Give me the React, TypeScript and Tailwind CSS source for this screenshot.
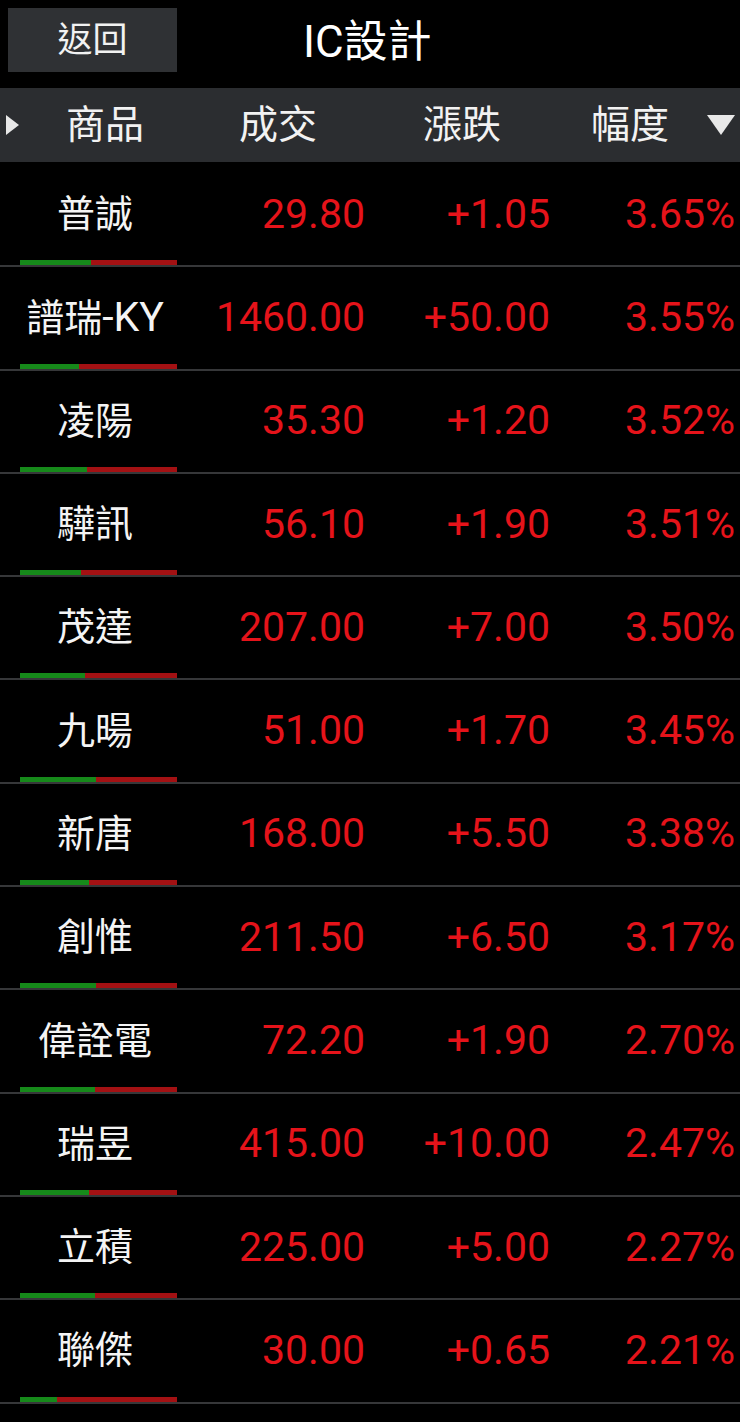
import React from "react";

type Row = { name: string; suffix?: string; price: string; change: string; pct: string; green: number };

const rows: Row[] = [
  { name: "普誠", price: "29.80", change: "+1.05", pct: "3.65%", green: 71 },
  { name: "譜瑞", suffix: "-KY", price: "1460.00", change: "+50.00", pct: "3.55%", green: 59 },
  { name: "凌陽", price: "35.30", change: "+1.20", pct: "3.52%", green: 67 },
  { name: "驊訊", price: "56.10", change: "+1.90", pct: "3.51%", green: 61 },
  { name: "茂達", price: "207.00", change: "+7.00", pct: "3.50%", green: 65 },
  { name: "九暘", price: "51.00", change: "+1.70", pct: "3.45%", green: 76 },
  { name: "新唐", price: "168.00", change: "+5.50", pct: "3.38%", green: 69 },
  { name: "創惟", price: "211.50", change: "+6.50", pct: "3.17%", green: 76 },
  { name: "偉詮電", price: "72.20", change: "+1.90", pct: "2.70%", green: 75 },
  { name: "瑞昱", price: "415.00", change: "+10.00", pct: "2.47%", green: 69 },
  { name: "立積", price: "225.00", change: "+5.00", pct: "2.27%", green: 75 },
  { name: "聯傑", price: "30.00", change: "+0.65", pct: "2.21%", green: 37 },
];

const font = { fontFamily: 'Roboto, "Noto Sans CJK TC", sans-serif' };

export default function App() {
  return (
    <div className="w-[740px] h-[1422px] bg-black overflow-hidden text-white" style={font}>
      {/* top bar */}
      <div className="h-[88px] flex items-start">
        <div className="mt-[8px] ml-[8px] w-[169px] h-[64px] bg-[#2f3134] flex items-center justify-center text-[35px] leading-none text-[#f2f2f2]">
          返回
        </div>
        <div className="pl-[126px] pt-[20px] text-[44px] leading-none text-white">IC設計</div>
      </div>
      {/* header */}
      <div className="h-[74px] bg-[#2b2d30] grid grid-cols-[19px_172px_174px_194px_142px_39px] items-center text-[39px] leading-none text-[#f2f2f2]">
        <div className="pl-[6px] flex items-center">
          <div className="w-0 h-0 border-t-[10px] border-b-[10px] border-l-[13px] border-t-transparent border-b-transparent border-l-[#e8e8e8]" />
        </div>
        <div className="text-center">商品</div>
        <div className="text-center">成交</div>
        <div className="text-center">漲跌</div>
        <div className="text-center">幅度</div>
        <div className="pl-[6px] flex items-center">
          <div className="w-0 h-0 border-l-[14px] border-r-[14px] border-t-[20px] border-l-transparent border-r-transparent border-t-[#e8e8e8]" />
        </div>
      </div>
      <div className="h-[2px]" />
      {rows.map((r) => (
        <div key={r.name} className="h-[103.3px] border-b-2 border-[#363739] flex flex-col">
          <div className="flex-1 grid grid-cols-[190px_175px_185px_185px] items-center pt-[4px]">
            <div className="text-center text-[38px] leading-none text-[#f4f4f4] whitespace-nowrap">
              {r.name}
              {r.suffix && <span className="text-[41px]">{r.suffix}</span>}
            </div>
            <div className="text-right text-[41px] leading-none text-[#e5131a]">{r.price}</div>
            <div className="text-right text-[41px] leading-none text-[#e5131a]">{r.change}</div>
            <div className="text-right text-[41px] leading-none text-[#e5131a]">{r.pct}</div>
          </div>
          <div className="ml-[20px] w-[157px] h-[5px] flex">
            <div className="h-full bg-[#16891a]" style={{ width: r.green }} />
            <div className="h-full flex-1 bg-[#a31113]" />
          </div>
        </div>
      ))}
    </div>
  );
}
